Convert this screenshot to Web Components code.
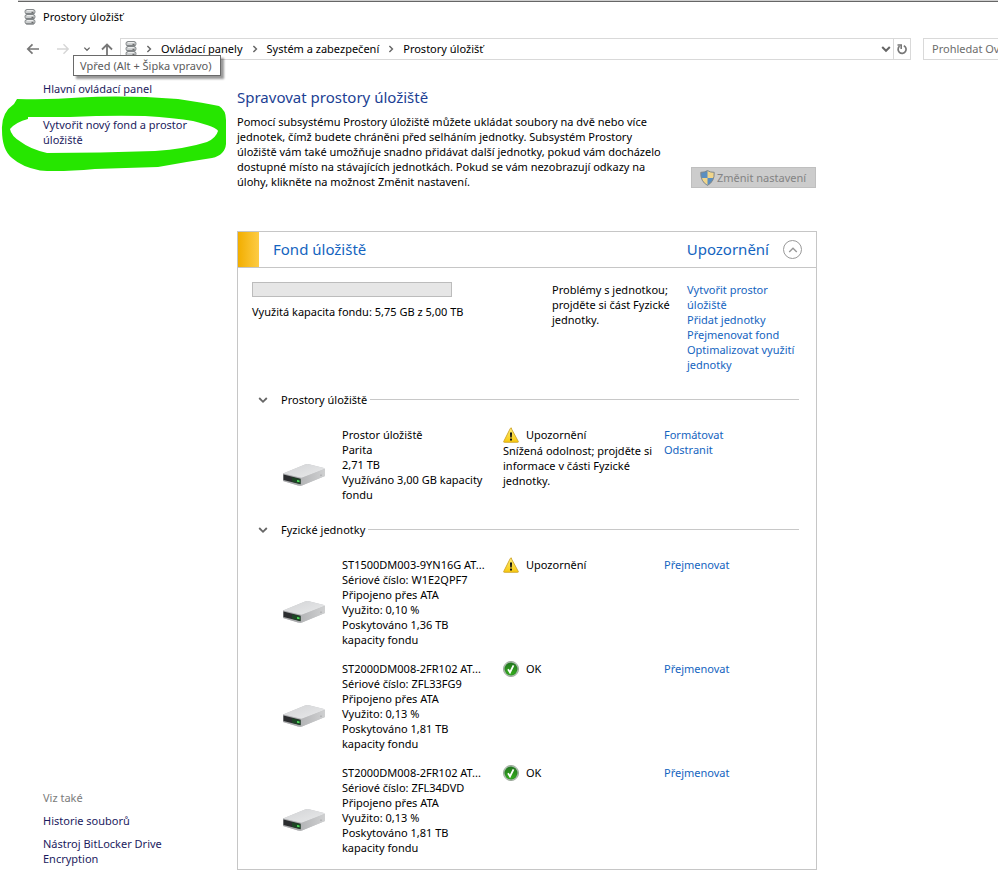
<!DOCTYPE html>
<html lang="cs">
<head>
<meta charset="utf-8">
<title>Prostory úložišť</title>
<style>
  html, body { margin: 0; background: #fff; }
  body { font: 11px/15px "Noto Sans", "Open Sans", sans-serif; color: #000; overflow-x: hidden; }
</style>
</head>
<body>
<storage-window></storage-window>
<script>
const define = (name, html, setup) => {
  const tpl = document.createElement('template');
  tpl.innerHTML = html;
  customElements.define(name, class extends HTMLElement {
    constructor() {
      super();
      this.attachShadow({ mode: 'open' }).append(tpl.content.cloneNode(true));
    }
    connectedCallback() { if (setup) setup(this, this.shadowRoot); }
  });
};

define('stack-icon', `
<style>:host{display:block;flex:none;line-height:0}</style>
<svg width="12" height="16" viewBox="0 0 12 16">
  <g stroke="#85898b" fill="#c9cccd">
    <rect x="1" y="0.5" width="10" height="4.500" rx="2"/>
    <rect x="1" y="5.500" width="10" height="4.500" rx="2"/>
    <rect x="1" y="10.500" width="10" height="4.500" rx="2"/>
  </g>
  <path d="M3 1.700h6M3 6.700h6M3 11.700h6" stroke="#fff" stroke-width=".8"/>
  <path d="M2 4.700h8M2 9.700h8M2 14.900h8" stroke="#787c7e"/>
  <path d="M7.500 3.300h2M7.500 8.300h2M7.500 13.300h2" stroke="#555"/>
</svg>`);

define('drive-icon', `
<style>:host{display:block;line-height:0}</style>
<svg width="48" height="48" viewBox="0 -1 48 48">
  <defs>
    <linearGradient id="top" x1="0" y1="0" x2="1" y2="1"><stop offset="0" stop-color="#d2d3d5"/><stop offset="1" stop-color="#e9eaeb"/></linearGradient>
    <linearGradient id="side" x1="0" y1="0" x2="1" y2="0"><stop offset="0" stop-color="#b4b5b7"/><stop offset="1" stop-color="#cfd0d1"/></linearGradient>
  </defs>
  <path d="M3 31.500L25 22.400Q27 21.600 29 22.200L44 26Q45 26.500 45 27.500V34L22 43.500Q20 44 18 43.400L3 39Z" fill="#c6c7c9"/>
  <path d="M3 31.500L25 22.400Q27 21.600 29 22.200L44 26Q45 26.500 43.500 27.200L22 35.800Z" fill="url(#top)"/>
  <path d="M21 36L45 27V34L22 43.500L21 43.700Z" fill="url(#side)"/>
  <path d="M3 31.500L21 36V43.700L18 43.400L3 39Z" fill="#a9aaac"/>
  <path d="M3.500 32.600L20.500 36.700V42.300L3.500 38Z" fill="#2b2d2f"/>
  <path d="M12 35.300L20.500 37.300V42L12 39.800Z" fill="#1d4425"/>
  <path d="M17 38L19.500 38.600V40.300L17 39.700Z" fill="#4fe05c"/>
  <path d="M40 32.500h2v1.500h-2z" fill="#b5b6b8"/>
</svg>`);

define('status-icon', `
<style>:host{display:block;flex:none;line-height:0;width:16px;height:16px}
:host([kind=ok]) .warn,:host([kind=warn]) .ok{display:none}</style>
<svg class="warn" width="16" height="16" viewBox="0 0 16 16">
  <defs><linearGradient id="y" x1="0" y1="0" x2="0" y2="1"><stop offset="0" stop-color="#fff07a"/><stop offset="1" stop-color="#f8c80c"/></linearGradient></defs>
  <path d="M8 1L15.300 14.500Q15.500 15.300 14.700 15.300H1.300Q.5 15.300 .7 14.500L7.300 1.400Q8 .2 8.700 1.400Z" fill="url(#y)" stroke="#cfa52a" stroke-width=".9"/>
  <path d="M7 5.500h2l-.3 5H7.300z" fill="#111"/><rect x="7" y="11.600" width="2" height="1.900" fill="#111"/>
</svg>
<svg class="ok" width="16" height="16" viewBox="0 0 16 16">
  <defs><linearGradient id="g" x1="0" y1="0" x2="0" y2="1"><stop offset="0" stop-color="#23761f"/><stop offset="1" stop-color="#35b01c"/></linearGradient></defs>
  <circle cx="8" cy="8" r="7.600" fill="#d3ddd2" stroke="#8b9a8a" stroke-width=".8"/>
  <circle cx="8" cy="8" r="6.300" fill="url(#g)" stroke="#24702a" stroke-width=".6"/>
  <path d="M5 8.300L7 11.400L10.500 4.300" fill="none" stroke="#fff" stroke-width="1.800"/>
</svg>`);

define('chevron-icon', `
<style>:host{display:block;flex:none;line-height:0;color:#666}
path{stroke-width:var(--chevron-weight,2)}
:host([dir=right]) svg{rotate:-90deg}:host([dir=up]) svg{rotate:180deg}</style>
<svg width="10" height="10" viewBox="0 0 10 10"><path d="M1.200 3L5 6.800L8.800 3" fill="none" stroke="currentColor"/></svg>`);

define('window-title', `
<style>
:host{display:flex;align-items:center;gap:7px;height:29px;padding-left:24px}
h1{font:inherit;margin:0}
</style>
<stack-icon></stack-icon><h1><slot></slot></h1>`);

define('address-bar', `
<style>
:host{display:flex;align-items:center;height:22px;padding:0 0 0 24px;position:relative}
button{all:unset;display:flex;align-items:center;justify-content:center}
.nav{width:18px;height:20px}
.back{margin-right:12px}.recent{width:12px;margin-left:9px;--chevron-weight:1.800;}
.recent chevron-icon{scale:.7}
.up{margin:0 4px 0 5px}
.box{flex:1;display:flex;align-items:center;border:1px solid #d9d9d9;height:20px;padding-left:4px;min-width:0}
ol{display:flex;list-style:none;margin:0;padding:0 0 1px;flex:1;min-width:0}
li{display:flex;align-items:center;white-space:nowrap}
li chevron-icon{margin:0 7px;--chevron-weight:1.800;scale:.8}
a{color:#000;text-decoration:none}
.drop{width:14px;height:20px}
.reload{width:16px;height:20px;border-left:1px solid #d9d9d9}
input{box-sizing:border-box;flex:0 0 75px;min-width:0;width:75px;height:22px;margin-left:12px;border:1px solid #d9d9d9;border-right:0;padding:0 0 1px 8px;font:inherit;color:#6d6d6d;background:#fff;outline:0;border-radius:0}
input::placeholder{color:#6d6d6d;opacity:1}
.tip{position:absolute;left:73px;top:17px;z-index:2;background:#fff;border:1px solid #6a6a6a;box-shadow:3px 3px 2px rgba(0,0,0,.4);color:#5b5b5b;padding:2px 8px 2px 6px;line-height:15px;white-space:nowrap}
</style>
<button class="nav back" aria-label="Zpět"><svg width="14" height="12" viewBox="0 0 14 12"><path d="M13 6H2M6.500 1.300L1.800 6L6.500 10.700" fill="none" stroke="#777" stroke-width="1.700"/></svg></button>
<button class="nav" aria-label="Vpřed"><svg width="14" height="12" viewBox="0 0 14 12"><path d="M1 6H12M7.500 1.300L12.200 6L7.500 10.700" fill="none" stroke="#d6d6d6" stroke-width="1.400"/></svg></button>
<button class="nav recent" aria-label="Poslední umístění"><chevron-icon></chevron-icon></button>
<button class="nav up" aria-label="Nahoru"><svg width="12" height="13" viewBox="0 0 12 13"><path d="M6 13V2M1 6.500L6 1.500L11 6.500" fill="none" stroke="#777" stroke-width="1.800"/></svg></button>
<nav class="box" aria-label="Adresa"><stack-icon></stack-icon>
  <ol>
    <li><chevron-icon dir="right"></chevron-icon><a href="#">Ovládací panely</a></li>
    <li><chevron-icon dir="right"></chevron-icon><a href="#">Systém a zabezpečení</a></li>
    <li><chevron-icon dir="right"></chevron-icon><a href="#">Prostory úložišť</a></li>
  </ol>
  <button class="drop" aria-label="Předchozí umístění"><chevron-icon></chevron-icon></button>
  <button class="reload" aria-label="Aktualizovat"><svg width="12" height="12" viewBox="0 0 12 12"><path d="M7.800 2.700A4 4 0 1 1 3.600 3.200" fill="none" stroke="#777" stroke-width="1.700"/><path d="M1.500 2H5.200V6" fill="none" stroke="#777" stroke-width="1.600"/></svg></button>
</nav>
<input type="text" placeholder="Prohledat Ov" aria-label="Prohledat Ovládací panely">
<div class="tip" role="tooltip">Vpřed (Alt + Šipka vpravo)</div>`);

define('side-panel', `
<style>
:host{display:flex;flex-direction:column;justify-content:space-between;padding:21px 0 15px 43px;position:relative;box-sizing:border-box}
nav{display:flex;flex-direction:column}
a{color:#1b1b60;text-decoration:none;white-space:nowrap}
.top{gap:21px}.bottom{gap:8px}
.bottom span{color:#7b7b7b}
.ring{position:absolute;left:0;top:36px;pointer-events:none}
</style>
<svg class="ring" width="228" height="76" viewBox="0 96 228 76"><path fill="#26e600" fill-rule="evenodd" d="M17 99Q50 100 80 97.500Q125 95 178 99Q205 103 219 106Q226 110 226 120V144Q225 155 212 158Q185 162 158 167Q125 168 95 169Q60 172 40 170.500Q22 167 12 158Q2 150 2 130Q1 113 14 104ZM28 117H70Q110 115 145 116Q175 118 193 121Q217 127 218 131Q216 138 207 142Q185 149 155 151Q100 153 47 153Q30 149 21 142Q11 136 10 129Q16 122 28 119Z"/></svg>
<nav class="top"><a href="#">Hlavní ovládací panel</a><a href="#">Vytvořit nový fond a prostor<br>úložiště</a></nav>
<nav class="bottom" aria-label="Viz také"><span>Viz také</span><a href="#">Historie souborů</a><a href="#">Nástroj BitLocker Drive<br>Encryption</a></nav>`);

define('page-intro', `
<style>
:host{display:grid;grid-template-columns:1fr auto;align-items:end}
h2{grid-column:1/-1;margin:0 0 6px;font-size:15px;line-height:22px;font-weight:400;color:#1c3f94}
p{margin:0;white-space:nowrap}
button{display:flex;align-items:center;gap:2px;height:21px;width:125px;padding:0 0 0 8px;border:1px solid #bfbfbf;background:#ccc;color:#838383;font:inherit;white-space:nowrap;border-radius:0;margin:0 1px 1px 0}
svg{flex:none}
</style>
<h2>Spravovat prostory úložiště</h2>
<p>Pomocí subsystému Prostory úložiště můžete ukládat soubory na dvě nebo více<br>jednotek, čímž budete chráněni před selháním jednotky. Subsystém Prostory<br>úložiště vám také umožňuje snadno přidávat další jednotky, pokud vám docházelo<br>dostupné místo na stávajících jednotkách. Pokud se vám nezobrazují odkazy na<br>úlohy, klikněte na možnost Změnit nastavení.</p>
<button disabled><svg width="15" height="16" viewBox="0 0 15 16"><path d="M7.500 .6Q4.500 2.500 .8 2.300Q.3 11.500 7.500 15.400Q14.700 11.500 14.200 2.300Q10.500 2.500 7.500 .6Z" fill="#f0d58a"/><path d="M7.500 .6Q4.500 2.500 .8 2.300Q.6 5.500 1.300 8H7.500ZM7.500 8V15.400Q12 13 13.600 8Z" fill="#5b8fc0"/><path d="M7.500 .6Q4.500 2.500 .8 2.300Q.3 11.500 7.500 15.400Q14.700 11.500 14.200 2.300Q10.500 2.500 7.500 .6Z" fill="none" stroke="#7f878d"/></svg>Změnit nastavení</button>`);

define('pool-section', `
<style>
:host{display:block}
header{display:flex;align-items:center;gap:3px;padding:0 17px 0 20px}
header::after{content:"";flex:1;height:1px;background:#c8c8c8}
button{all:unset;width:10px;height:10px;margin-right:10px;--chevron-weight:1.800}
h3{margin:0;font:inherit}
.items{display:grid;gap:14px;padding:20px 0}
:host(:last-of-type) .items{padding-bottom:14px}
</style>
<header><button aria-label="Sbalit"><chevron-icon></chevron-icon></button><h3></h3></header>
<div class="items"><slot></slot></div>`, (el, root) => { root.querySelector('h3').textContent = el.getAttribute('heading'); });

define('drive-row', `
<style>
:host{display:grid;grid-template-columns:62px 161px 161px 1fr;padding-left:42px;align-items:start}
drive-icon{align-self:center}
.text,.note{white-space:nowrap}
.state{display:flex;align-items:flex-start;gap:7px;height:16px}
</style>
<drive-icon></drive-icon>
<div class="text"><slot></slot></div>
<div><div class="state"><status-icon></status-icon><span></span></div><div class="note"><slot name="note"></slot></div></div>
<div><slot name="tasks"></slot></div>`, (el, root) => {
  root.querySelector('status-icon').setAttribute('kind', el.getAttribute('state'));
  root.querySelector('span').textContent = el.getAttribute('state') === 'ok' ? 'OK' : 'Upozornění';
});

define('task-link', `
<style>:host{display:block}a{color:#1464c0;text-decoration:none;white-space:nowrap}</style>
<a href="#"><slot></slot></a>`);

define('storage-pool', `
<style>
:host{display:block;border:1px solid #c6c6c6;box-sizing:border-box}
.head{display:flex;align-items:center;height:35px;border-bottom:1px solid #c6c6c6;font-size:15px;color:#1464c0}
.swatch{width:21px;align-self:stretch;background:linear-gradient(90deg,#f2ae00,#fdcc45);margin-right:14px}
h2{font:inherit;margin:0;flex:1}
.head button{all:unset;box-sizing:border-box;width:19px;height:19px;margin:0 14px;border:1px solid #999;border-radius:50%;display:grid;place-items:center;--chevron-weight:1.400}
.head chevron-icon{color:#999}
.summary{display:grid;grid-template-columns:1fr 135px 129px;padding:14px 0 20px 14px;align-items:start}
.gauge{width:198px;height:13px;border:1px solid #bcbcbc;background:#e6e6e6;margin-bottom:7px;overflow:hidden}
meter{display:block;appearance:none;-webkit-appearance:none;width:100%;height:13px;background:none}
meter::-webkit-meter-bar{background:none;border:0;border-radius:0;height:13px}
meter::-webkit-meter-optimum-value{background:#e6e6e6}
.msg{white-space:nowrap}
</style>
<div class="head"><div class="swatch"></div><h2>Fond úložiště</h2><span>Upozornění</span><button aria-label="Sbalit fond"><chevron-icon dir="up"></chevron-icon></button></div>
<div class="summary">
  <div><div class="gauge"><meter id="m" min="0" max="5000" value="5.75"></meter></div><label for="m">Využitá kapacita fondu: 5,75 GB z 5,00 TB</label></div>
  <div class="msg">Problémy s jednotkou;<br>projděte si část Fyzické<br>jednotky.</div>
  <div><task-link>Vytvořit prostor<br>úložiště</task-link><task-link>Přidat jednotky</task-link><task-link>Přejmenovat fond</task-link><task-link>Optimalizovat využití<br>jednotky</task-link></div>
</div>
<pool-section heading="Prostory úložiště">
  <drive-row state="warn">Prostor úložiště<br>Parita<br>2,71 TB<br>Využíváno 3,00 GB kapacity<br>fondu
    <div slot="note">Snížená odolnost; projděte si<br>informace v části Fyzické<br>jednotky.</div>
    <task-link slot="tasks">Formátovat</task-link><task-link slot="tasks">Odstranit</task-link></drive-row>
</pool-section>
<pool-section heading="Fyzické jednotky">
  <drive-row state="warn">ST1500DM003-9YN16G AT...<br>Sériové číslo: W1E2QPF7<br>Připojeno přes ATA<br>Využito: 0,10 %<br>Poskytováno 1,36 TB<br>kapacity fondu<task-link slot="tasks">Přejmenovat</task-link></drive-row>
  <drive-row state="ok">ST2000DM008-2FR102 AT...<br>Sériové číslo: ZFL33FG9<br>Připojeno přes ATA<br>Využito: 0,13 %<br>Poskytováno 1,81 TB<br>kapacity fondu<task-link slot="tasks">Přejmenovat</task-link></drive-row>
  <drive-row state="ok">ST2000DM008-2FR102 AT...<br>Sériové číslo: ZFL34DVD<br>Připojeno přes ATA<br>Využito: 0,13 %<br>Poskytováno 1,81 TB<br>kapacity fondu<task-link slot="tasks">Přejmenovat</task-link></drive-row>
</pool-section>`);

define('storage-window', `
<style>
:host{display:flex;flex-direction:column;min-height:100vh;box-sizing:border-box}
.edge{height:2px;margin-left:18px;box-sizing:border-box;border-top:1px solid #cfcfcf;border-bottom:1px solid #666}
address-bar{margin-top:7px}
.cols{flex:1;display:grid;grid-template-columns:237px minmax(0,580px)}
main{padding:26px 0 11px}
page-intro{margin-bottom:42px}
</style>
<div class="edge"></div>
<window-title>Prostory úložišť</window-title>
<address-bar></address-bar>
<div class="cols">
  <side-panel></side-panel>
  <main><page-intro></page-intro><storage-pool></storage-pool></main>
</div>`);
</script>
</body>
</html>
